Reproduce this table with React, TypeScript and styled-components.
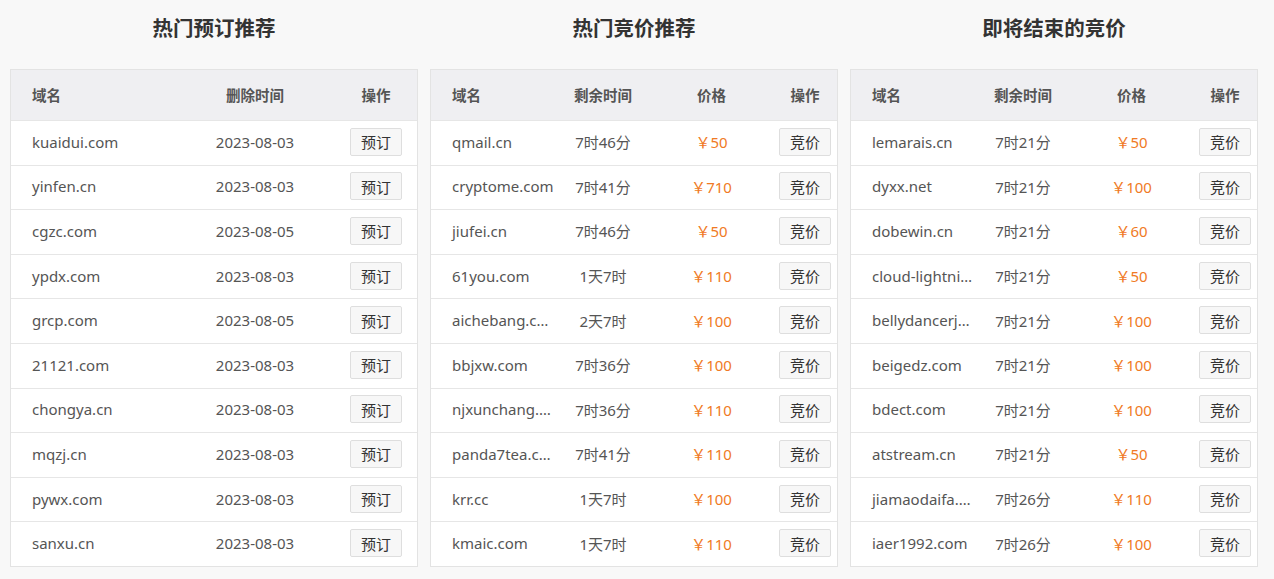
import React from "react";
import styled, { createGlobalStyle } from "styled-components";

const Global = createGlobalStyle`
  html, body { margin: 0; padding: 0; background: #f8f8f8; }
  body { font-family: "Noto Sans", "Noto Sans CJK SC", sans-serif; color: #555; }
`;

const Page = styled.div`
  display: flex;
  gap: 12px;
  padding: 0 16px 0 10px;
  width: 1274px;
  box-sizing: border-box;
`;

const Column = styled.section`
  width: 408px;
  display: flex;
  flex-direction: column;
`;

const Title = styled.h2`
  margin: 0;
  padding-top: 14px;
  margin-bottom: 29px;
  height: 26px;
  line-height: 26px;
  text-align: center;
  font-size: 20.5px;
  font-weight: 700;
  color: #333;
  font-family: "Noto Sans CJK SC", sans-serif;
`;

const Table = styled.div`
  border: 1px solid #e3e3e3;
  background: #fff;
`;

const Row = styled.div<{ $cols: string; $head?: boolean }>`
  display: grid;
  grid-template-columns: ${(p) => p.$cols};
  align-items: center;
  box-sizing: border-box;
  padding-bottom: 2px;
  height: ${(p) => (p.$head ? "51px" : "44.6px")};
  background: ${(p) => (p.$head ? "#efeff2" : "#fff")};
  border-bottom: 1px solid #e6e6e6;
  &:last-child { border-bottom: none; height: 43.6px; }
`;

const Cell = styled.div<{ $left?: boolean; $head?: boolean; $price?: boolean }>`
  display: block;
  min-width: 0;
  text-align: ${(p) => (p.$left ? "left" : "center")};
  padding-left: ${(p) => (p.$left ? "21px" : "0")};
  font-size: ${(p) => (p.$head ? "14.5px" : "15px")};
  font-weight: ${(p) => (p.$head ? 700 : 400)};
  color: ${(p) => (p.$price ? "#f07a25" : "#555")};
  font-family: ${(p) =>
    p.$head ? '"Noto Sans CJK SC", sans-serif' : '"Noto Sans", "Noto Sans CJK SC", sans-serif'};
  white-space: nowrap;
  overflow: hidden;
  text-overflow: ellipsis;
`;

const Button = styled.button`
  display: inline-block;
  vertical-align: middle;
  width: 52px;
  height: 28px;
  box-sizing: border-box;
  border: 1px solid #dedede;
  border-radius: 2px;
  background: #f7f7f7;
  color: #333;
  font-size: 15px;
  font-family: "Noto Sans CJK SC", sans-serif;
  padding: 0;
  cursor: pointer;
`;

const reserve = [
  ["kuaidui.com", "2023-08-03"],
  ["yinfen.cn", "2023-08-03"],
  ["cgzc.com", "2023-08-05"],
  ["ypdx.com", "2023-08-03"],
  ["grcp.com", "2023-08-05"],
  ["21121.com", "2023-08-03"],
  ["chongya.cn", "2023-08-03"],
  ["mqzj.cn", "2023-08-03"],
  ["pywx.com", "2023-08-03"],
  ["sanxu.cn", "2023-08-03"],
];

const hot = [
  ["qmail.cn", "7时46分", "50"],
  ["cryptome.com", "7时41分", "710"],
  ["jiufei.cn", "7时46分", "50"],
  ["61you.com", "1天7时", "110"],
  ["aichebang.com.cn", "2天7时", "100"],
  ["bbjxw.com", "7时36分", "100"],
  ["njxunchang.com", "7时36分", "110"],
  ["panda7tea.com", "7时41分", "110"],
  ["krr.cc", "1天7时", "100"],
  ["kmaic.com", "1天7时", "110"],
];

const ending = [
  ["lemarais.cn", "7时21分", "50"],
  ["dyxx.net", "7时21分", "100"],
  ["dobewin.cn", "7时21分", "60"],
  ["cloud-lightning.com", "7时21分", "50"],
  ["bellydancerjewelry.com", "7时21分", "100"],
  ["beigedz.com", "7时21分", "100"],
  ["bdect.com", "7时21分", "100"],
  ["atstream.cn", "7时21分", "50"],
  ["jiamaodaifa.com", "7时26分", "110"],
  ["iaer1992.com", "7时26分", "100"],
];

const COLS3 = "164px 160px 82px";
const COLS4 = "125px 94px 123px 64px";

const ReserveTable = () => (
  <Column>
    <Title>热门预订推荐</Title>
    <Table>
      <Row $cols={COLS3} $head>
        <Cell $left $head>域名</Cell>
        <Cell $head>删除时间</Cell>
        <Cell $head>操作</Cell>
      </Row>
      {reserve.map(([d, t]) => (
        <Row $cols={COLS3} key={d}>
          <Cell $left>{d}</Cell>
          <Cell>{t}</Cell>
          <Cell><Button>预订</Button></Cell>
        </Row>
      ))}
    </Table>
  </Column>
);

const BidTable = ({ title, rows }: { title: string; rows: string[][] }) => (
  <Column>
    <Title>{title}</Title>
    <Table>
      <Row $cols={COLS4} $head>
        <Cell $left $head>域名</Cell>
        <Cell $head>剩余时间</Cell>
        <Cell $head>价格</Cell>
        <Cell $head>操作</Cell>
      </Row>
      {rows.map(([d, t, p]) => (
        <Row $cols={COLS4} key={d}>
          <Cell $left>{d}</Cell>
          <Cell>{t}</Cell>
          <Cell $price>￥{p}</Cell>
          <Cell><Button>竞价</Button></Cell>
        </Row>
      ))}
    </Table>
  </Column>
);

export default function App() {
  return (
    <>
      <Global />
      <Page>
        <ReserveTable />
        <BidTable title="热门竞价推荐" rows={hot} />
        <BidTable title="即将结束的竞价" rows={ending} />
      </Page>
    </>
  );
}
